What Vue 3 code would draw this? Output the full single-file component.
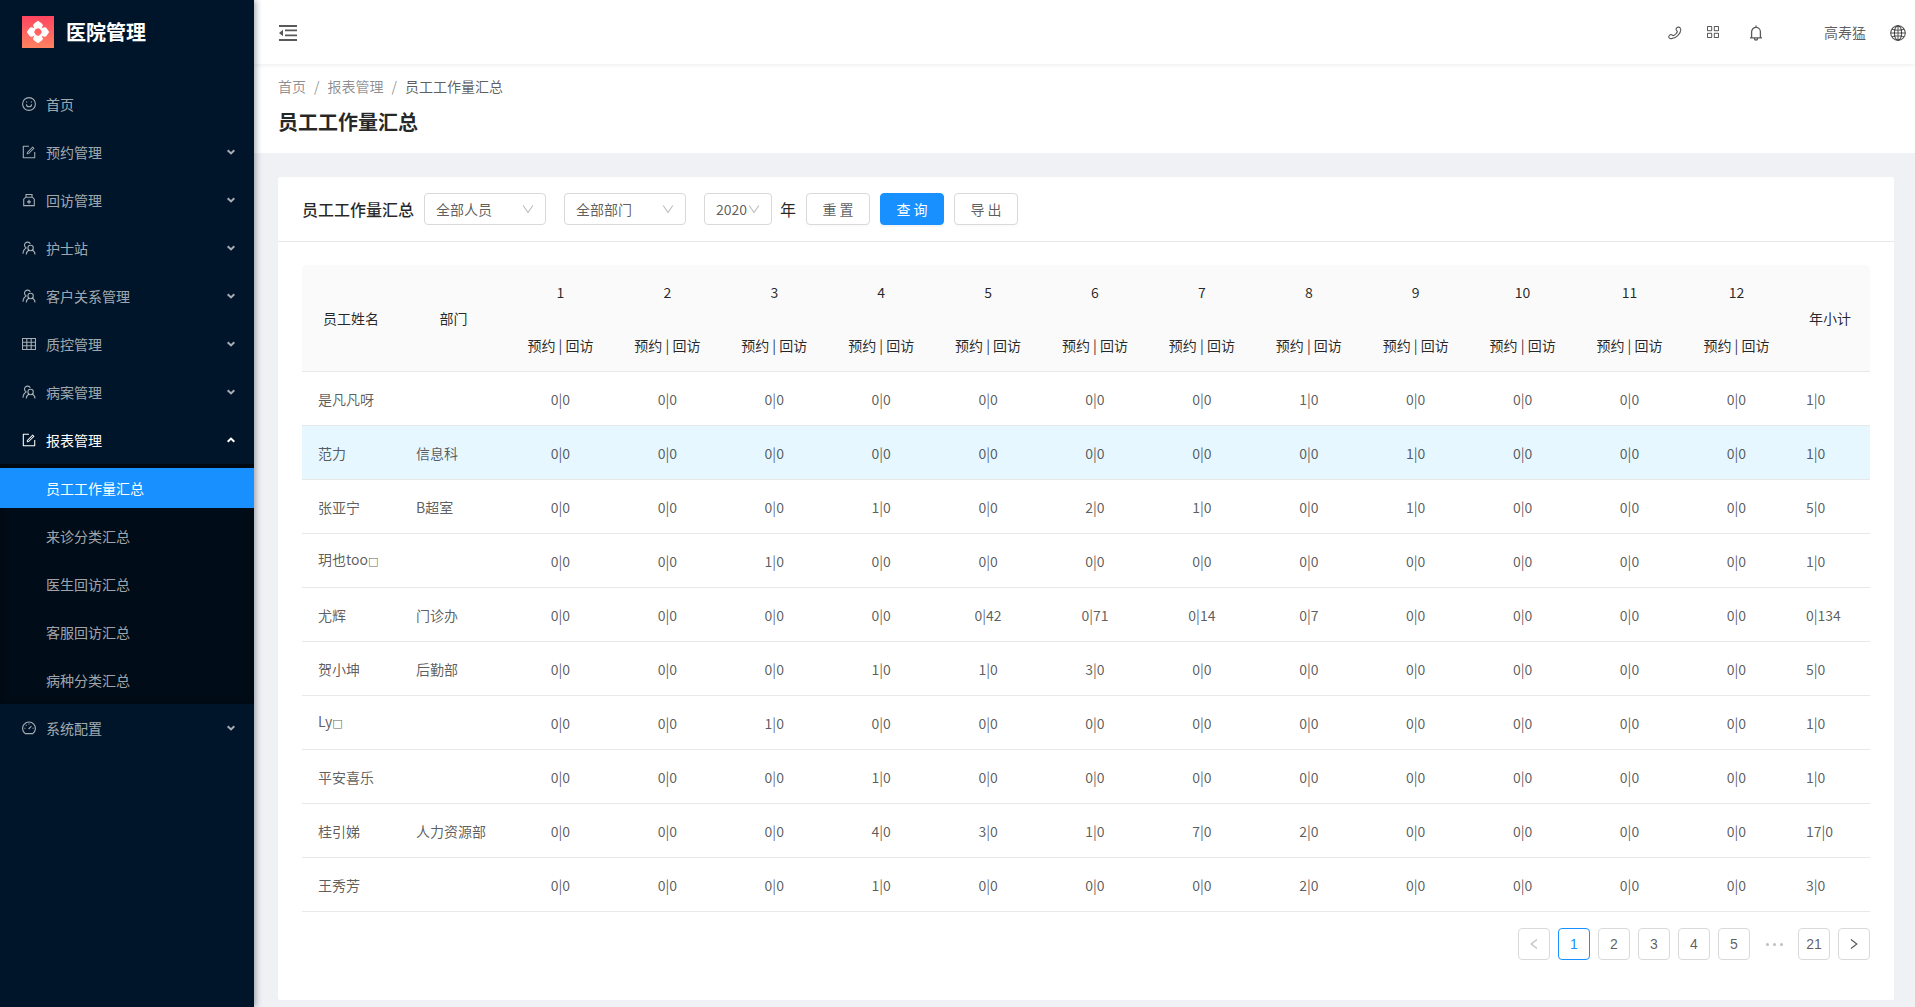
<script setup>
import { ref } from 'vue'

const menu = [
  { label: '首页', icon: 'smile' },
  { label: '预约管理', icon: 'form', sub: true },
  { label: '回访管理', icon: 'medicine', sub: true },
  { label: '护士站', icon: 'team', sub: true },
  { label: '客户关系管理', icon: 'team', sub: true },
  { label: '质控管理', icon: 'table', sub: true },
  { label: '病案管理', icon: 'team', sub: true },
  {
    label: '报表管理',
    icon: 'form',
    sub: true,
    open: true,
    children: ['员工工作量汇总', '来诊分类汇总', '医生回访汇总', '客服回访汇总', '病种分类汇总']
  },
  { label: '系统配置', icon: 'dashboard', sub: true }
]
const current = ref('员工工作量汇总')

const staff = ref('全部人员')
const dept = ref('全部部门')
const year = ref('2020')

// Only the months with activity are listed; every other month is 0|0.
const rows = [
  { name: '是凡凡呀', dept: '', months: { 8: '1|0' }, total: '1|0' },
  { name: '范力', dept: '信息科', months: { 9: '1|0' }, total: '1|0', active: true },
  { name: '张亚宁', dept: 'B超室', months: { 4: '1|0', 6: '2|0', 7: '1|0', 9: '1|0' }, total: '5|0' },
  { name: '玥也too', box: true, dept: '', months: { 3: '1|0' }, total: '1|0' },
  { name: '尤辉', dept: '门诊办', months: { 5: '0|42', 6: '0|71', 7: '0|14', 8: '0|7' }, total: '0|134' },
  { name: '贺小坤', dept: '后勤部', months: { 4: '1|0', 5: '1|0', 6: '3|0' }, total: '5|0' },
  { name: 'Ly', box: true, dept: '', months: { 3: '1|0' }, total: '1|0' },
  { name: '平安喜乐', dept: '', months: { 4: '1|0' }, total: '1|0' },
  { name: '桂引娣', dept: '人力资源部', months: { 4: '4|0', 5: '3|0', 6: '1|0', 7: '7|0', 8: '2|0' }, total: '17|0' },
  { name: '王秀芳', dept: '', months: { 4: '1|0', 8: '2|0' }, total: '3|0' }
]
const page = ref(1)
</script>

<template>
  <div class="layout">
    <aside class="sider">
      <a class="logo" href="#">
        <svg width="32" height="32" viewBox="0 0 32 32" aria-hidden="true">
          <defs>
            <linearGradient id="logo-bg" x1="0" y1="0" x2="0" y2="1">
              <stop offset="0" stop-color="#ff4560" />
              <stop offset="1" stop-color="#ff8360" />
            </linearGradient>
          </defs>
          <rect width="32" height="32" fill="url(#logo-bg)" />
          <g fill="#fff">
            <path id="petal" d="M16 4.800l3.800 2.600c1 .8 1.300 2 .7 3.100l-1 2.300c-.3.700-1.200.8-1.700.2a2.600 2.600 0 0 0-3.600 0c-.5.6-1.400.5-1.700-.2l-1-2.300c-.6-1.100-.3-2.300.7-3.100z" />
            <use href="#petal" transform="rotate(90 16 16)" />
            <use href="#petal" transform="rotate(180 16 16)" />
            <use href="#petal" transform="rotate(270 16 16)" />
          </g>
        </svg>
        <span>医院管理</span>
      </a>
      <nav>
        <ul class="menu">
          <li v-for="m in menu" :key="m.label">
            <a href="#" class="item" :class="{ open: m.open }">
              <svg class="icon" viewBox="0 0 14 14" width="14" height="14" fill="none" stroke="currentColor" stroke-width="1.1" aria-hidden="true">
                <template v-if="m.icon === 'smile'">
                  <circle cx="7" cy="7" r="6.4" />
                  <path d="M4.4 7.4c.2 3.2 5 3.2 5.2 0" />
                  <path d="M4 5h1.2M8.8 5H10" stroke-width="1.2" />
                </template>
                <g v-else-if="m.icon === 'form'" transform="scale(.01367)" fill="currentColor" stroke="none">
                  <path d="M960 512h-60c-4.400 0-8 3.600-8 8v368H136V136h368c4.400 0 8-3.600 8-8V64c0-4.400-3.600-8-8-8H88c-17.700 0-32 14.300-32 32v848c0 17.700 14.300 32 32 32h848c17.700 0 32-14.300 32-32V520c0-4.400-3.600-8-8-8z" />
                  <path d="M355.900 534.900L354 653.800c-.1 8.900 7.100 16.200 16 16.200h.4l118-2.900c2-.1 4-.9 5.400-2.300l415.900-415c3.100-3.100 3.100-8.200 0-11.300L785.400 114.300c-1.600-1.600-3.600-2.300-5.700-2.300s-4.100.8-5.700 2.300l-415.800 415a8.300 8.300 0 0 0-2.300 5.600zm63.500 23.600L779.700 199l45.200 45.100-360.500 359.700-45.700 1.100.7-46.400z" />
                </g>
                <template v-else-if="m.icon === 'medicine'">
                  <path d="M1.700 12.600V6.200l2-2h6.600l2 2v6.400zM4 4V1.500h6V4" />
                  <path d="M7 6.800v4M5 8.800h4" stroke-width="1.3" />
                </template>
                <template v-else-if="m.icon === 'team'">
                  <circle cx="8.600" cy="7" r="2.700" />
                  <path d="M4.500 7.100A3.100 3.100 0 1 1 8.300 2.700M1 12.800c.1-2.600 1.300-4.700 3.500-5.700M4.300 13.500c.1-1.900 1-3.500 2.500-4.500M10.400 9c1.600 1 2.500 2.600 2.600 4.500" />
                </template>
                <template v-else-if="m.icon === 'table'">
                  <path d="M.5 1.500h13v11H.5zM.5 5.200h13M.5 8.800h13M4.800 2v10M9.200 2v10" />
                </template>
                <template v-else>
                  <path d="M3.200 12.600a6.400 6.400 0 1 1 7.600 0z" />
                  <path d="M6.600 8l2.800-2.800M2.400 7.200h1M10.600 7.200h1M7 2.400v1.100M3.800 4l.7.7" />
                </template>
              </svg>
              <span>{{ m.label }}</span>
              <svg v-if="m.sub" class="arrow" width="8" height="6" viewBox="0 0 8 6" fill="none" stroke="currentColor" stroke-width="2" aria-hidden="true">
                <path :d="m.open ? 'M.7 4.800L4 1.600l3.300 3.200' : 'M.7 1.200L4 4.400l3.300-3.200'" />
              </svg>
            </a>
            <ul v-if="m.children" class="submenu">
              <li v-for="c in m.children" :key="c">
                <a href="#" class="item child" :class="{ selected: c === current }" @click.prevent="current = c">{{ c }}</a>
              </li>
            </ul>
          </li>
        </ul>
      </nav>
    </aside>

    <div class="main">
      <header class="topbar">
        <button class="icon-btn" type="button" aria-label="收起菜单">
          <svg width="18" height="16" viewBox="0 0 18 16" fill="currentColor" aria-hidden="true">
            <path d="M0 0h18v2H0zM0 14h18v2H0zM6 4.600h12v1.600H6zM6 9.600h12v1.600H6zM4 4.800v6.400L0 8z" />
          </svg>
        </button>
        <div class="tools">
          <button class="icon-btn phone" type="button" aria-label="电话">
            <svg width="14" height="14" viewBox="0 0 14 14" fill="none" stroke="currentColor" stroke-width="1.1" aria-hidden="true">
              <path d="M8.700 1.900c1-1.100 2.700-1.100 3.500.1 1 1.700.2 4.800-2.200 7.300s-5.700 3.700-7.900 3.200C.8 12.200.3 10.600 1.300 9.600c.7-.8 1.600-1.400 2.400-.9l1.300 1c1.500-.4 3.900-2.500 4.400-4.200L8.500 4.300c-.6-.8-.4-1.700.2-2.400z" />
            </svg>
          </button>
          <button class="icon-btn grid" type="button" aria-label="应用">
            <svg width="12" height="12" viewBox="0 0 12 12" fill="none" stroke="currentColor" aria-hidden="true">
              <path d="M.5.5h4.200v4.200H.5zM7.300.5h4.200v4.200H7.300zM.5 7.300h4.200v4.200H.5zM7.300 7.300h4.200v4.200H7.300z" />
            </svg>
          </button>
          <button class="icon-btn bell" type="button" aria-label="通知">
            <svg width="14" height="16" viewBox="0 0 14 16" fill="none" stroke="currentColor" stroke-width="1.3" aria-hidden="true">
              <path d="M2.600 12.600V6.800a4.400 4.400 0 0 1 8.800 0v5.800M1 12.800h12M7 .4v2M5.400 13.400a1.600 1.600 0 0 0 3.200 0" />
            </svg>
          </button>
          <a class="user" href="#">高寿猛</a>
          <button class="icon-btn" type="button" aria-label="语言">
            <svg width="16" height="16" viewBox="0 0 16 16" fill="none" stroke="currentColor" stroke-width="1.1" aria-hidden="true">
              <circle cx="8" cy="8" r="7.300" />
              <ellipse cx="8" cy="8" rx="3.600" ry="7.300" />
              <path d="M8 .7v14.600M.7 8h14.600M2 4.300c3.400 1 8.600 1 12 0M2 11.700c3.400-1 8.600-1 12 0" />
            </svg>
          </button>
        </div>
      </header>

      <div class="page-head">
        <nav class="crumbs" aria-label="面包屑">
          <a href="#">首页</a><i>/</i><a href="#">报表管理</a><i>/</i><span>员工工作量汇总</span>
        </nav>
        <h1>员工工作量汇总</h1>
      </div>

      <main class="card">
        <form class="filters" @submit.prevent>
          <h2>员工工作量汇总</h2>
          <div class="select">
            <select v-model="staff" aria-label="人员"><option>全部人员</option></select>
            <svg width="12" height="12" viewBox="0 0 12 12" fill="none" stroke="currentColor" stroke-width="1.2" aria-hidden="true"><path d="M1.200 2.500L6 9.500l4.800-7" /></svg>
          </div>
          <div class="select">
            <select v-model="dept" aria-label="部门"><option>全部部门</option></select>
            <svg width="12" height="12" viewBox="0 0 12 12" fill="none" stroke="currentColor" stroke-width="1.2" aria-hidden="true"><path d="M1.200 2.500L6 9.500l4.800-7" /></svg>
          </div>
          <div class="year">
            <div class="select">
              <select id="year" v-model="year"><option>2020</option></select>
              <svg width="12" height="12" viewBox="0 0 12 12" fill="none" stroke="currentColor" stroke-width="1.2" aria-hidden="true"><path d="M1.200 2.500L6 9.500l4.800-7" /></svg>
            </div>
            <label for="year">年</label>
          </div>
          <button class="btn" type="reset">重 置</button>
          <button class="btn primary" type="submit">查 询</button>
          <button class="btn" type="button">导 出</button>
        </form>

        <div class="body">
          <table>
            <colgroup>
              <col class="c-name" />
              <col class="c-dept" />
              <col v-for="n in 12" :key="n" />
              <col class="c-total" />
            </colgroup>
            <thead>
              <tr>
                <th rowspan="2" scope="col" class="line">员工姓名</th>
                <th rowspan="2" scope="col" class="line">部门</th>
                <th v-for="n in 12" :key="n" scope="col">{{ n }}</th>
                <th rowspan="2" scope="col" class="line">年小计</th>
              </tr>
              <tr>
                <th v-for="n in 12" :key="n" scope="col" class="line">预约 | 回访</th>
              </tr>
            </thead>
            <tbody>
              <tr v-for="r in rows" :key="r.name" :class="{ active: r.active }">
                <td>{{ r.name }}<span v-if="r.box" class="box">□</span></td>
                <td>{{ r.dept }}</td>
                <td v-for="n in 12" :key="n" class="num">{{ r.months[n] || '0|0' }}</td>
                <td>{{ r.total }}</td>
              </tr>
            </tbody>
          </table>

          <nav class="pager" aria-label="分页">
            <button type="button" disabled aria-label="上一页">
              <svg width="8" height="12" viewBox="0 0 8 12" fill="none" stroke="currentColor" stroke-width="1.2" aria-hidden="true"><path d="M7 1.500L1.200 6 7 10.500" /></svg>
            </button>
            <button v-for="n in 5" :key="n" type="button" :class="{ on: n === page }" @click="page = n">{{ n }}</button>
            <span class="more" aria-hidden="true"><b></b><b></b><b></b></span>
            <button type="button" @click="page = 21">21</button>
            <button type="button" aria-label="下一页">
              <svg width="8" height="12" viewBox="0 0 8 12" fill="none" stroke="currentColor" stroke-width="1.2" aria-hidden="true"><path d="M1 1.500L6.800 6 1 10.500" /></svg>
            </button>
          </nav>
        </div>
      </main>
    </div>
  </div>
</template>

<style>
body {
  margin: 0;
  background: #f0f1f5;
}
</style>

<style scoped>
.layout {
  display: flex;
  min-height: 100vh;
  font: 14px/20px "Noto Sans CJK SC", sans-serif;
  color: rgba(0, 0, 0, 0.65);
}
.layout *,
.layout {
  box-sizing: border-box;
}
a {
  color: inherit;
  text-decoration: none;
}
ul {
  list-style: none;
  margin: 0;
  padding: 0;
}
button,
select {
  font: inherit;
  color: inherit;
}

/* sidebar */
.sider {
  flex: none;
  width: 254px;
  position: relative;
  z-index: 2;
  background: #001529;
  box-shadow: 2px 0 6px rgba(0, 21, 41, 0.35);
}
.logo {
  display: flex;
  align-items: center;
  gap: 12px;
  height: 64px;
  padding-left: 22px;
  color: #fff;
  font-size: 20px;
  line-height: 32px;
  font-weight: 700;
}
.menu {
  padding-top: 16px;
}
.menu li {
  padding: 4px 0;
}
.item {
  display: flex;
  align-items: center;
  height: 40px;
  padding: 0 19px 0 22px;
  color: rgba(255, 255, 255, 0.65);
}
.icon {
  margin-right: 10px;
}
.arrow {
  margin-left: auto;
}
.open {
  color: #fff;
}
.menu > li:has(.submenu) {
  padding-bottom: 0;
}
.submenu {
  margin-top: 4px;
  background: #000c17;
  box-shadow: inset 0 2px 8px rgba(0, 0, 0, 0.45);
}
.child {
  padding-left: 46px;
}
.selected {
  background: #1890ff;
  color: #fff;
}

/* top bar */
.main {
  flex: 1;
  min-width: 0;
}
.topbar {
  position: relative;
  z-index: 1;
  display: flex;
  align-items: center;
  justify-content: space-between;
  height: 64px;
  padding: 2px 9px 0 25px;
  background: #fff;
  box-shadow: 0 1px 4px rgba(0, 21, 41, 0.08);
}
.icon-btn {
  display: flex;
  padding: 0;
  border: 0;
  background: none;
}
.tools {
  display: flex;
  align-items: center;
}
.phone {
  margin-right: 25px;
}
.grid {
  margin-right: 30px;
  padding-bottom: 2px;
}
.bell {
  margin-right: 61px;
}
.user {
  margin-right: 24px;
  padding-bottom: 2px;
}

/* page heading */
.page-head {
  padding: 12px 24px 15px;
  background: #fff;
}
.crumbs {
  display: flex;
}
.crumbs a,
.crumbs i {
  color: rgba(0, 0, 0, 0.45);
}
.crumbs i {
  margin: 0 8px;
  font-style: normal;
}
h1 {
  margin: 10px 0 0;
  font-size: 20px;
  line-height: 32px;
  font-weight: 700;
  color: rgba(0, 0, 0, 0.85);
}

/* card */
.card {
  margin: 24px 21px 0 24px;
  background: #fff;
  border-radius: 2px;
}
.filters {
  display: flex;
  align-items: center;
  gap: 10px;
  height: 65px;
  padding: 0 24px;
  border-bottom: 1px solid #e8e8e8;
}
h2 {
  margin: 0;
  font-size: 16px;
  font-weight: 500;
  color: rgba(0, 0, 0, 0.85);
}
.select {
  position: relative;
  width: 122px;
  margin-right: 8px;
}
.year {
  display: flex;
  align-items: center;
}
.year .select {
  width: 68px;
}
.select select {
  display: block;
  width: 100%;
  height: 32px;
  padding: 0 11px;
  border: 1px solid #d9d9d9;
  border-radius: 4px;
  background: #fff;
  appearance: none;
}
.select svg {
  position: absolute;
  top: 10px;
  right: 12px;
  color: rgba(0, 0, 0, 0.25);
  pointer-events: none;
}
.year label {
  font-size: 16px;
  color: rgba(0, 0, 0, 0.85);
}
.btn {
  width: 64px;
  height: 32px;
  padding: 0;
  border: 1px solid #d9d9d9;
  border-radius: 4px;
  background: #fff;
  box-shadow: 0 2px 0 rgba(0, 0, 0, 0.015);
}
.primary {
  border-color: #1890ff;
  background: #1890ff;
  color: #fff;
  box-shadow: 0 2px 0 rgba(0, 0, 0, 0.045);
}

/* table */
.body {
  padding: 23px 24px 40px;
}
table {
  width: 100%;
  table-layout: fixed;
  border-spacing: 0;
}
.c-name {
  width: 98px;
}
.c-dept {
  width: 107px;
}
.c-total {
  width: 80px;
}
th {
  height: 53px;
  padding: 0;
  background: #fafafa;
  font-weight: 400;
  color: rgba(0, 0, 0, 0.85);
}
th:first-child.line {
  border-top-left-radius: 4px;
}
th:last-child.line {
  border-top-right-radius: 4px;
}
tr + tr th:first-child.line,
tr + tr th:last-child.line {
  border-radius: 0;
}
.line {
  height: 54px;
  border-bottom: 1px solid #e8e8e8;
}
td {
  height: 54px;
  padding: 0 16px;
  border-bottom: 1px solid #e8e8e8;
  white-space: nowrap;
}
.num {
  padding: 0;
  text-align: center;
}
.active td {
  background: #e6f7ff;
}
.box {
  font: 11px/20px "DejaVu Sans", sans-serif;
}

/* pagination */
.pager {
  display: flex;
  justify-content: flex-end;
  gap: 8px;
  margin-top: 16px;
  font-family: "Liberation Sans", sans-serif;
}
.pager button {
  display: flex;
  align-items: center;
  justify-content: center;
  width: 32px;
  height: 32px;
  padding: 0;
  border: 1px solid #d9d9d9;
  border-radius: 4px;
  background: #fff;
}
.pager button:disabled {
  color: rgba(0, 0, 0, 0.25);
}
.pager .on {
  border-color: #1890ff;
  color: #1890ff;
}
.more {
  display: flex;
  align-items: center;
  justify-content: center;
  gap: 4px;
  width: 32px;
}
.more b {
  width: 3px;
  height: 3px;
  border-radius: 50%;
  background: rgba(0, 0, 0, 0.25);
}
</style>
